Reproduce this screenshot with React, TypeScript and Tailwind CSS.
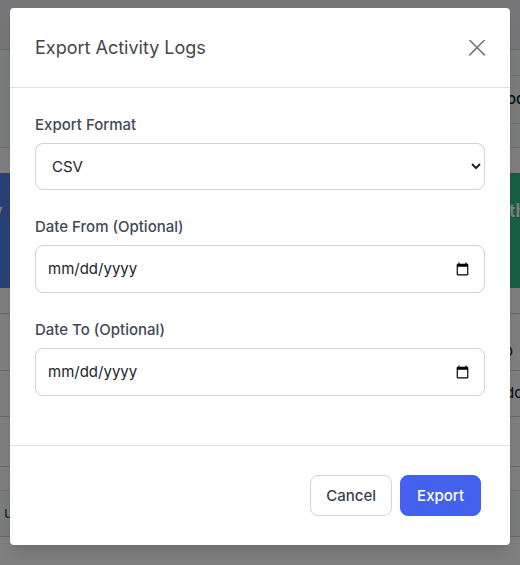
import { useState } from 'react';
import type { ReactNode } from 'react';

function Field({ id, label, children }: { id: string; label: string; children: ReactNode }) {
  return (
    <div className="mb-6">
      <label htmlFor={id} className="block mb-1.5 text-[15px] leading-[25px] font-medium text-[#414957]">
        {label}
      </label>
      {children}
    </div>
  );
}

function DateInput({ id, value, onChange }: { id: string; value: string; onChange: (value: string) => void }) {
  return (
    <input
      id={id}
      type="date"
      value={value}
      onChange={(e) => onChange(e.target.value)}
      className="block w-full h-12 px-3 text-[15px] text-[#212529] bg-white border border-[#d1d3d6] rounded-lg [&::-webkit-datetime-edit-month-field]:p-0 [&::-webkit-datetime-edit-day-field]:p-0 [&::-webkit-datetime-edit-year-field]:p-0"
    />
  );
}

// Activity page that stays visible around the edges of the dialog
function ActivityPage() {
  return (
    <div aria-hidden="true" className="absolute inset-0 overflow-hidden whitespace-nowrap text-[15px] text-gray-900 bg-white">
      <div className="h-[50px] border-b border-gray-300 bg-[#ececf0]" />
      <div className="h-[98px] pt-[25px] pl-10 border-b border-gray-300 bg-[#f7faf8]">
        <div className="h-[49px] flex items-center justify-end border-y border-gray-300">
          <span className="w-[13px] font-medium">od</span>
        </div>
      </div>
      <div className="flex mt-[25px] h-[115px] text-lg font-semibold text-white">
        <div className="flex-1 pt-6 bg-[#5480f0]">
          <span className="block w-1 -ml-2">y</span>
        </div>
        <div className="flex-1 flex justify-end pt-6 bg-[#30c088]">
          <span className="w-[11px]">th</span>
        </div>
      </div>
      <div className="h-[83px] pt-[25px]">
        <div className="h-[58px] flex items-end justify-end pb-2 border-y border-gray-300">
          <span className="w-4">o</span>
        </div>
      </div>
      <div className="h-[46px] flex items-center justify-end border-b border-gray-300">
        <span className="w-[15px]">do</span>
      </div>
      <div className="h-[50px] border-b border-gray-300" />
      <div className="h-6 border-b border-gray-200" />
      <div className="h-[46px] flex items-center pl-1 border-b border-gray-300 bg-[#f7faf8] text-gray-700">u</div>
    </div>
  );
}

function App() {
  const [format, setFormat] = useState('csv');
  const [dateFrom, setDateFrom] = useState('');
  const [dateTo, setDateTo] = useState('');

  return (
    <div className="relative min-h-screen overflow-hidden font-['Inter',sans-serif]">
      <ActivityPage />

      <div className="relative min-h-screen px-2.5 pt-2 pb-5 bg-black/50">
        <div role="dialog" aria-modal="true" aria-labelledby="export-title" className="bg-white rounded shadow-lg">
          {/* Header */}
          <div className="flex items-center justify-between h-20 px-[25px] border-b border-[#dee0e3]">
            <h2 id="export-title" className="text-lg text-[#43464c]">Export Activity Logs</h2>
            <button type="button" aria-label="Close" className="text-[#777777]">
              <svg className="w-4 h-4" viewBox="0 0 16 16" fill="none" stroke="currentColor" strokeWidth="1.6" strokeLinecap="round">
                <path d="M0.8 0.3l14.6 14.6M15.4 0.3L0.8 14.9" />
              </svg>
            </button>
          </div>

          {/* Body */}
          <div className="px-[25px] pt-6 pb-[25px]">
            <Field id="format" label="Export Format">
              <select
                id="format"
                value={format}
                onChange={(e) => setFormat(e.target.value)}
                className="block w-full h-[47px] px-3 text-[15px] text-[#212529] bg-white border border-[#d1d3d6] rounded-lg"
              >
                <option value="csv">CSV</option>
              </select>
            </Field>
            <Field id="date-from" label="Date From (Optional)">
              <DateInput id="date-from" value={dateFrom} onChange={setDateFrom} />
            </Field>
            <Field id="date-to" label="Date To (Optional)">
              <DateInput id="date-to" value={dateTo} onChange={setDateTo} />
            </Field>
          </div>

          {/* Footer */}
          <div className="flex justify-end gap-2 p-[29px] border-t border-[#dee0e3] text-[15px] font-medium">
            <button type="button" className="h-[41px] px-[15px] pt-0.5 text-[#374151] bg-white border border-[#d1d3d6] rounded-lg">
              Cancel
            </button>
            <button type="button" className="h-[41px] px-4 pt-0.5 text-white bg-[#4361ee] border border-[#4361ee] rounded-lg">
              Export
            </button>
          </div>
        </div>
      </div>
    </div>
  );
}

export default App;
